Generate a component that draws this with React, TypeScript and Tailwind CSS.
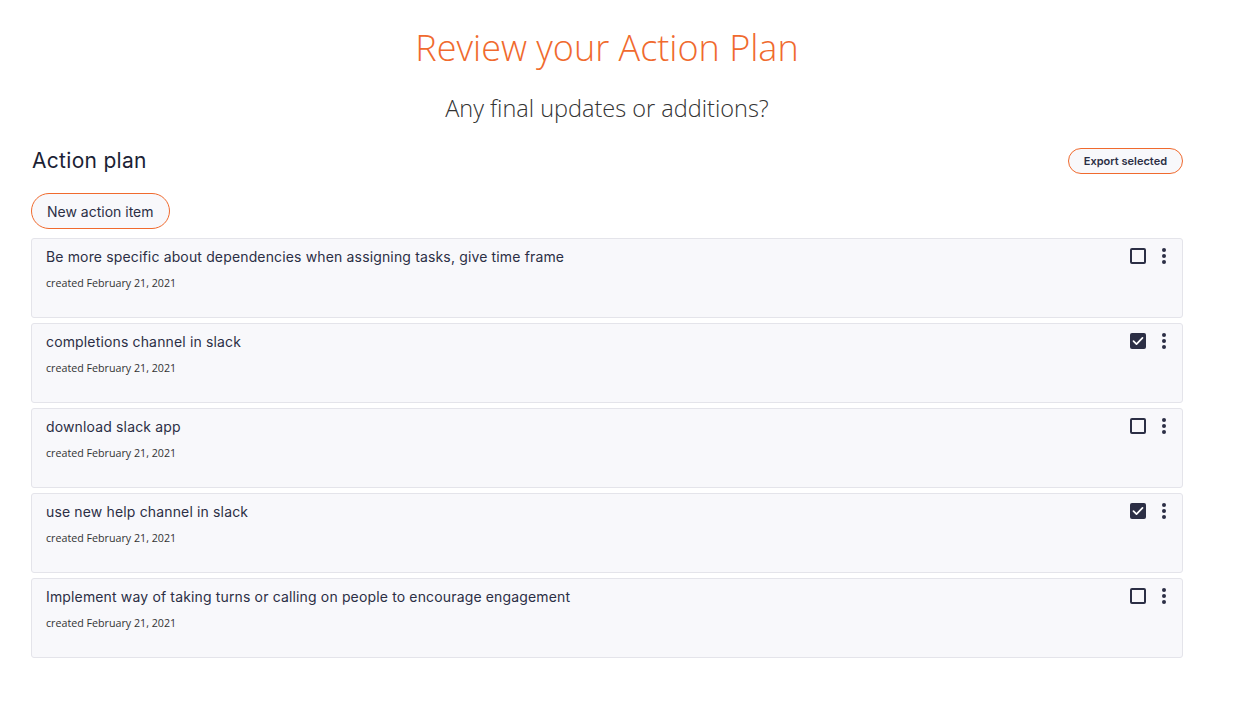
const items = [
  { text: "Be more specific about dependencies when assigning tasks, give time frame", checked: false },
  { text: "completions channel in slack", checked: true },
  { text: "download slack app", checked: false },
  { text: "use new help channel in slack", checked: true },
  { text: "Implement way of taking turns or calling on people to encourage engagement", checked: false },
];

function Checkbox({ checked }: { checked: boolean }) {
  if (checked) {
    return (
      <div className="w-4 h-4 rounded-[2px] bg-[#2c2f45] flex items-center justify-center">
        <svg width="16" height="16" viewBox="0 0 16 16" fill="none">
          <path d="M3.5 8.2l3 2.9 6-6.2" stroke="white" strokeWidth="1.7" strokeLinecap="round" strokeLinejoin="round" />
        </svg>
      </div>
    );
  }
  return <div className="w-4 h-4 rounded-[2px] border-2 border-[#2c2f45]" />;
}

function Kebab() {
  return (
    <div className="flex flex-col items-center gap-[2px] w-4">
      <span className="w-[4px] h-[4px] rounded-full bg-[#2c2f45]" />
      <span className="w-[4px] h-[4px] rounded-full bg-[#2c2f45]" />
      <span className="w-[4px] h-[4px] rounded-full bg-[#2c2f45]" />
    </div>
  );
}

export default function App() {
  return (
    <div className="min-h-screen bg-white" style={{ fontFamily: "Inter, 'Noto Sans', sans-serif" }}>
      <div className="ml-[31px] w-[1152px] pt-[24px]">
        <h1 className="text-center text-[36px] leading-[48px] font-light text-[#f06a2e]" style={{ fontFamily: "'Open Sans', sans-serif" }}>
          Review your Action Plan
        </h1>
        <p className="text-center text-[23.5px] leading-[32px] font-light text-[#333] mt-[20px]" style={{ fontFamily: "'Open Sans', sans-serif" }}>
          Any final updates or additions?
        </p>

        <div className="flex items-center justify-between mt-[23px]">
          <h2 className="text-[21px] leading-[28px] tracking-[0.3px] text-[#1c1f35] pl-[1px]">Action plan</h2>
          <button className="h-[26px] px-[15px] rounded-full border border-[#f06a2e] bg-[#f8f8fb] text-[11px] font-semibold text-[#2c2f45]">
            Export selected
          </button>
        </div>

        <button className="mt-[18px] h-[36px] px-[15px] rounded-full border border-[#f06a2e] bg-[#f8f8fb] text-[14px] text-[#2c2f45]">
          New action item
        </button>

        <div className="mt-[9px] flex flex-col gap-[5px]">
          {items.map((item, i) => (
            <div key={i} className="h-[80px] rounded-[3px] border border-[#e4e4ea] bg-[#f8f8fb] pl-[14px] pr-[10px] pt-[9px] flex justify-between">
              <div>
                <div className="text-[14px] leading-[18px] tracking-[0.15px] text-[#2c2f45]">{item.text}</div>
                <div className="mt-[9px] text-[10.7px] text-[#333]" style={{ fontFamily: "'Open Sans', sans-serif" }}>
                  created February 21, 2021
                </div>
              </div>
              <div className="flex items-start gap-[10px]">
                <Checkbox checked={item.checked} />
                <Kebab />
              </div>
            </div>
          ))}
        </div>
      </div>
    </div>
  );
}
